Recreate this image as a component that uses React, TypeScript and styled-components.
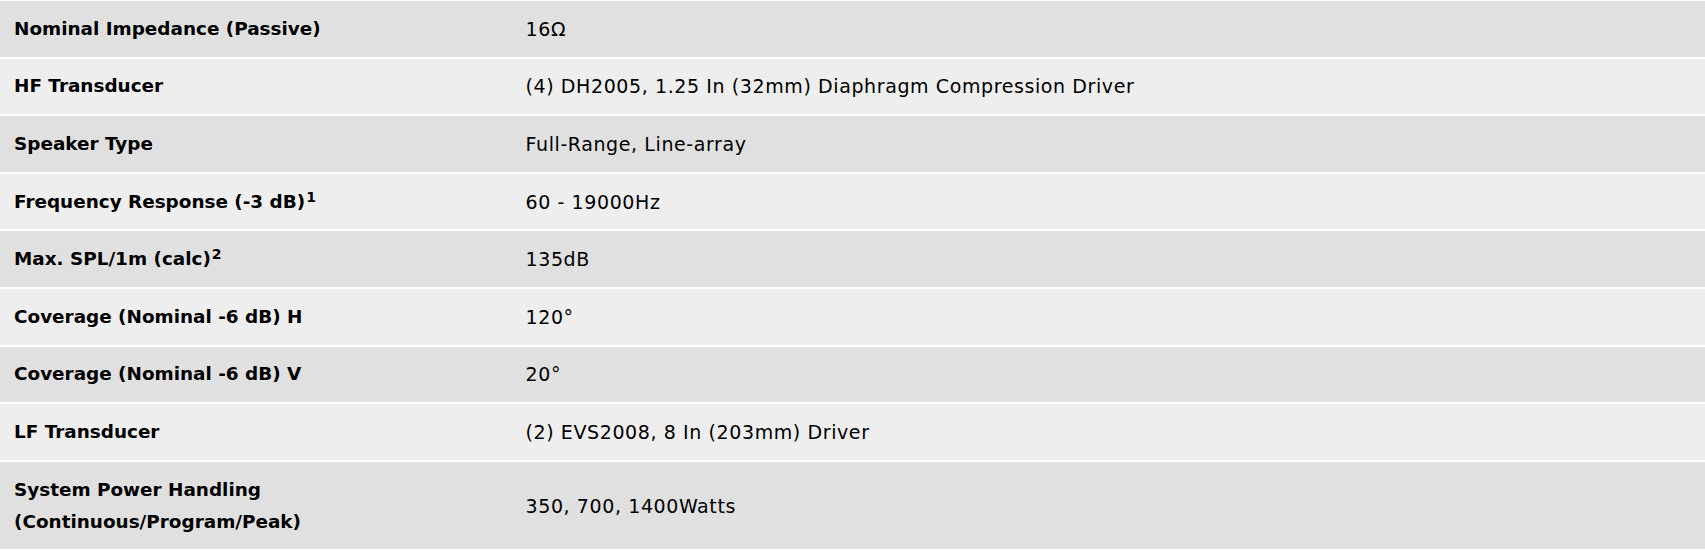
import * as React from "react";
import styled, {createGlobalStyle} from 'styled-components'

const GlobalStyle = createGlobalStyle`
  html, body {
    margin: 0;
    padding: 0;
    background: #ffffff;
  }
  body {
    font-family: "DejaVu Sans", "Liberation Sans", sans-serif;
    color: #000000;
  }
`

const SpecList = styled('div')`
  width: 100%;
  display: flex;
  flex-direction: column;
  gap: 2px;
  padding-top: 1px;
  background: #ffffff;
`
const SpecRow = styled('div')<{ $shade: 'dark' | 'light' }>`
  display: grid;
  grid-template-columns: 30% 70%;
  align-items: center;
  min-height: 55.6px;
  background: ${p => p.$shade === 'dark' ? '#e0e0e0' : '#eeeeee'};
`
const LabelCell = styled('div')`
  padding: 11.8px 14px;
  font-family: "DejaVu Sans", sans-serif;
  font-weight: 700;
  font-size: 18.4px;
  line-height: 32px;

  sup {
    font-size: 14px;
    line-height: 0;
    vertical-align: 6px;
    margin-left: 1px;
  }
`
const ValueCell = styled('div')`
  padding: 11.8px 14px;
  font-family: "DejaVu Sans", sans-serif;
  font-weight: 400;
  font-size: 19px;
  letter-spacing: 0.6px;
  line-height: 32px;
`

const specs: { label: React.ReactNode, value: string }[] = [
    {label: 'Nominal Impedance (Passive)', value: '16Ω'},
    {label: 'HF Transducer', value: '(4) DH2005, 1.25 In (32mm) Diaphragm Compression Driver'},
    {label: 'Speaker Type', value: 'Full-Range, Line-array'},
    {label: <>Frequency Response (-3 dB)<sup>1</sup></>, value: '60 - 19000Hz'},
    {label: <>Max. SPL/1m (calc)<sup>2</sup></>, value: '135dB'},
    {label: 'Coverage (Nominal -6 dB) H', value: '120°'},
    {label: 'Coverage (Nominal -6 dB) V', value: '20°'},
    {label: 'LF Transducer', value: '(2) EVS2008, 8 In (203mm) Driver'},
    {label: <>System Power Handling<br/>(Continuous/Program/Peak)</>, value: '350, 700, 1400Watts'},
]

const App: React.FC = () => {
    return <>
        <GlobalStyle/>
        <SpecList>
            {specs.map((spec, i) => <SpecRow key={i} $shade={i % 2 === 0 ? 'dark' : 'light'}>
                <LabelCell>{spec.label}</LabelCell>
                <ValueCell>{spec.value}</ValueCell>
            </SpecRow>)}
        </SpecList>
    </>
};

export default App;
